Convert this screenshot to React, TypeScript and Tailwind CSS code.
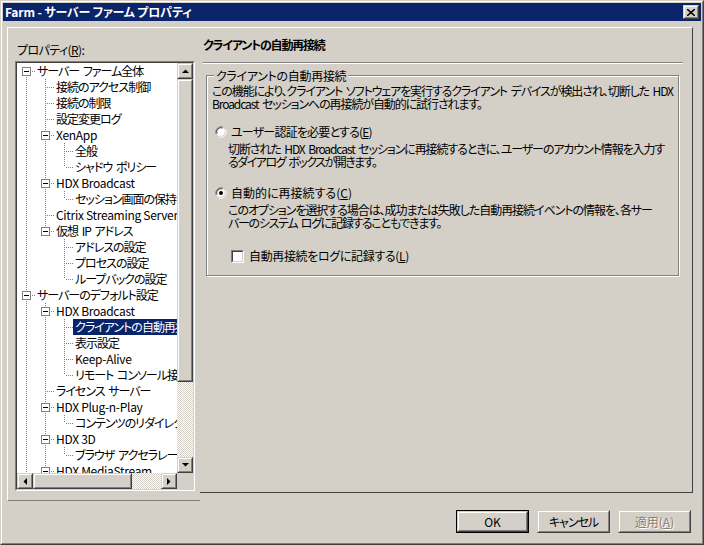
import React from "react";

type TreeNode = { label: string; level: number; expandable?: boolean; selected?: boolean };

const tree: TreeNode[] = [
  { label: "サーバー ファーム全体", level: 0, expandable: true },
  { label: "接続のアクセス制御", level: 1 },
  { label: "接続の制限", level: 1 },
  { label: "設定変更ログ", level: 1 },
  { label: "XenApp", level: 1, expandable: true },
  { label: "全般", level: 2 },
  { label: "シャドウ ポリシー", level: 2 },
  { label: "HDX Broadcast", level: 1, expandable: true },
  { label: "セッション画面の保持", level: 2 },
  { label: "Citrix Streaming Server", level: 1 },
  { label: "仮想 IP アドレス", level: 1, expandable: true },
  { label: "アドレスの設定", level: 2 },
  { label: "プロセスの設定", level: 2 },
  { label: "ループバックの設定", level: 2 },
  { label: "サーバーのデフォルト設定", level: 0, expandable: true },
  { label: "HDX Broadcast", level: 1, expandable: true },
  { label: "クライアントの自動再接続", level: 2, selected: true },
  { label: "表示設定", level: 2 },
  { label: "Keep-Alive", level: 2 },
  { label: "リモート コンソール接続", level: 2 },
  { label: "ライセンス サーバー", level: 1 },
  { label: "HDX Plug-n-Play", level: 1, expandable: true },
  { label: "コンテンツのリダイレクト", level: 2 },
  { label: "HDX 3D", level: 1, expandable: true },
  { label: "ブラウザ アクセラレーション", level: 2 },
  { label: "HDX MediaStream", level: 1, expandable: true },
  { label: "Flash", level: 2 },
  { label: "ライセンス", level: 1 },
  { label: "オフライン アクセス", level: 0, expandable: true },
];

const hasNext = (i: number) => {
  const lv = tree[i].level;
  for (let j = i + 1; j < tree.length; j++) {
    if (tree[j].level < lv) return false;
    if (tree[j].level === lv) return true;
  }
  return false;
};

const ancestorContinues = (i: number, lv: number) => {
  for (let j = i - 1; j >= 0; j--) {
    if (tree[j].level === lv) return hasNext(j);
  }
  return false;
};

// x centre of the connector for a level, relative to the tree's left edge
const cx = (lv: number) => 9 + lv * 19;

const isCjk = (s: string) => /[\u3040-\u30ff\u4e00-\u9fff]/.test(s);

function Connector({ index }: { index: number }) {
  const node = tree[index];
  const w = 18 + node.level * 19;
  const c = cx(node.level) + 0.5;
  return (
    <svg width={w} height={16} className="shrink-0" shapeRendering="crispEdges">
      {Array.from({ length: node.level }).map((_, a) =>
        ancestorContinues(index, a) ? (
          <line key={a} x1={cx(a) + 0.5} y1={0} x2={cx(a) + 0.5} y2={16} stroke="#808080" strokeDasharray="1 1" />
        ) : null
      )}
      {index > 0 && <line x1={c} y1={0} x2={c} y2={8} stroke="#808080" strokeDasharray="1 1" />}
      {hasNext(index) && <line x1={c} y1={8} x2={c} y2={16} stroke="#808080" strokeDasharray="1 1" />}
      <line x1={c + 1} y1={8.5} x2={c + 9} y2={8.5} stroke="#808080" strokeDasharray="1 1" />
      {node.expandable && (
        <g>
          <rect x={c - 4} y={4.5} width={8} height={8} fill="#fff" stroke="#808080" />
          <rect x={c - 2.5} y={8} width={5} height={1} fill="#000" />
        </g>
      )}
    </svg>
  );
}

function Raised({ className = "", children }: { className?: string; children?: React.ReactNode }) {
  return (
    <div className={`border border-t-[#d4d0c8] border-l-[#d4d0c8] border-r-[#404040] border-b-[#404040] ${className}`}>
      <div className="w-full h-full border border-t-white border-l-white border-r-[#808080] border-b-[#808080] bg-[#d4d0c8] flex items-center justify-center">
        {children}
      </div>
    </div>
  );
}

function Arrow({ dir }: { dir: "up" | "down" | "left" | "right" }) {
  const pts = {
    up: "0,4 7,4 3.5,0.5",
    down: "0,0 7,0 3.5,3.5",
    left: "4,0 4,7 0.5,3.5",
    right: "0,0 0,7 3.5,3.5",
  }[dir];
  const vertical = dir === "up" || dir === "down";
  return (
    <svg width={vertical ? 7 : 4} height={vertical ? 4 : 7}>
      <polygon points={pts} fill="#000" />
    </svg>
  );
}

const dither =
  "[background-image:repeating-conic-gradient(#d4d0c8_0_25%,#ffffff_0_50%)] [background-size:2px_2px]";

function TreeBox() {
  return (
    <div className="w-[180px] h-[430px] border border-t-[#808080] border-l-[#808080] border-r-white border-b-white">
      <div className="w-full h-full border border-t-[#404040] border-l-[#404040] border-r-[#d4d0c8] border-b-[#d4d0c8] flex flex-col">
        <div className="flex flex-1 min-h-0">
          <div className="w-[160px] bg-white overflow-hidden">
            {tree.map((n, i) => (
              <div key={i} className="flex h-4 items-center whitespace-nowrap">
                <Connector index={i} />
                <span
                  className={`px-[2px] leading-4 ${
                    isCjk(n.label) ? "tracking-[-1px] [word-spacing:2px]" : "tracking-[-0.3px]"
                  } ${n.selected ? "bg-[#0a246a] text-white" : ""}`}
                >
                  {n.label}
                </span>
              </div>
            ))}
          </div>
          <div className="w-4 flex flex-col">
            <Raised className="h-4 w-4 shrink-0">
              <Arrow dir="up" />
            </Raised>
            <Raised className="h-[303px] w-4 shrink-0" />
            <div className={`flex-1 ${dither}`} />
            <Raised className="h-4 w-4 shrink-0">
              <Arrow dir="down" />
            </Raised>
          </div>
        </div>
        <div className="h-4 flex shrink-0">
          <Raised className="h-4 w-4 shrink-0">
            <Arrow dir="left" />
          </Raised>
          <Raised className="h-4 w-[99px] shrink-0" />
          <div className={`flex-1 ${dither}`} />
          <Raised className="h-4 w-4 shrink-0">
            <Arrow dir="right" />
          </Raised>
          <div className="w-4 bg-[#d4d0c8]" />
        </div>
      </div>
    </div>
  );
}

function Radio({ checked }: { checked?: boolean }) {
  return (
    <svg width={12} height={12} className="shrink-0">
      <path d="M1 8 A5.5 5.5 0 0 1 8 1" stroke="#808080" fill="none" />
      <path d="M11 4 A5.5 5.5 0 0 1 4 11" stroke="#fff" fill="none" />
      <circle cx={6} cy={6} r={4.5} fill="#fff" />
      <path d="M2 7.5 A4.2 4.2 0 0 1 7.5 2" stroke="#404040" fill="none" />
      <path d="M10 4.5 A4.2 4.2 0 0 1 4.5 10" stroke="#d4d0c8" fill="none" />
      {checked && <circle cx={6} cy={6} r={2} fill="#000" />}
    </svg>
  );
}

function Checkbox() {
  return (
    <div className="w-[13px] h-[13px] border border-t-[#808080] border-l-[#808080] border-r-white border-b-white shrink-0">
      <div className="w-full h-full border border-t-[#404040] border-l-[#404040] border-r-[#d4d0c8] border-b-[#d4d0c8] bg-white" />
    </div>
  );
}

function Button({ children, isDefault, disabled }: { children: React.ReactNode; isDefault?: boolean; disabled?: boolean }) {
  return (
    <div className={`w-[73px] h-[23px] ${isDefault ? "border border-black" : ""}`}>
      <Raised className="w-full h-full">
        <span className={disabled ? "text-[#808080] [text-shadow:1px_1px_0_#fff]" : ""}>{children}</span>
      </Raised>
    </div>
  );
}

export default function App() {
  return (
    <div className="w-[704px] h-[545px] bg-[#d4d0c8] text-[12px] text-black [font-family:'Noto_Sans_CJK_JP','Noto_Sans',sans-serif] [font-feature-settings:'palt'] overflow-hidden">
      <div className="w-full h-full border border-t-[#d4d0c8] border-l-[#d4d0c8] border-r-[#404040] border-b-[#404040]">
        <div className="w-full h-full border border-t-white border-l-white border-r-[#808080] border-b-[#808080] p-px flex flex-col">
          {/* title bar */}
          <div className="h-[18px] bg-[#0a246a] flex items-center justify-between pl-[2px] pr-[2px] shrink-0">
            <span className="text-white font-bold leading-[18px] tracking-[-0.15px]">
              Farm - サーバー ファーム プロパティ
            </span>
            <Raised className="w-4 h-[14px]">
              <svg width={8} height={7}>
                <path d="M0 0 L8 7 M8 0 L0 7" stroke="#000" strokeWidth={1.6} />
              </svg>
            </Raised>
          </div>

          {/* body */}
          <div className="ml-[4px] mt-[6px] flex items-start">
            {/* left: tree pane */}
            <div className="w-[193px] h-[474px] border-t border-l border-b border-t-white border-l-white border-b-[#808080] pl-[7px] pt-[14px] flex flex-col">
              <div className="h-4 leading-4 pl-[2px] tracking-[-0.6px]">
                プロパティ(<span className="underline">R</span>):
              </div>
              <div className="mt-[3px]">
                <TreeBox />
              </div>
            </div>

            {/* right: property page */}
            <div className="w-[493px] h-[466px] border-t border-r border-b border-t-white border-r-[#404040] border-b-[#404040] pl-[3px] pt-[9px] flex flex-col">
              <div className="h-4 leading-4 font-bold tracking-[-1.2px]">クライアントの自動再接続</div>
              <div className="mt-[9px] w-[480px] border-t border-t-[#808080] border-b border-b-white" />
              <div className="relative mt-[11px] ml-[3px] w-[473px] h-[201px] border border-[#808080] shadow-[inset_1px_1px_0_#fff,1px_1px_0_#fff]">
                <span className="absolute -top-[8px] left-[7px] px-[2px] bg-[#d4d0c8] leading-4 tracking-[-0.3px]">
                  クライアントの自動再接続
                </span>
                <div className="pl-[5px] pt-[8px] leading-[13px] whitespace-nowrap tracking-[-1.1px] [word-spacing:2px]">
                  <div>この機能により、クライアント ソフトウェアを実行するクライアント デバイスが検出され、切断した HDX</div>
                  <div>Broadcast セッションへの再接続が自動的に試行されます。</div>
                </div>
                <div className="pl-[8px] mt-[14px] flex items-center gap-[4px] h-4">
                  <Radio />
                  <span className="tracking-[-0.8px]">
                    ユーザー認証を必要とする(<span className="underline">E</span>)
                  </span>
                </div>
                <div className="pl-[21px] mt-[2px] leading-[13px] whitespace-nowrap [word-spacing:2px]">
                  <div className="tracking-[-1.1px]">
                    切断された HDX Broadcast セッションに再接続するときに、ユーザーのアカウント情報を入力す
                  </div>
                  <div className="tracking-[-1.5px]">るダイアログ ボックスが開きます。</div>
                </div>
                <div className="pl-[8px] mt-[17px] flex items-center gap-[4px] h-4">
                  <Radio checked />
                  <span>
                    自動的に再接続する(<span className="underline">C</span>)
                  </span>
                </div>
                <div className="pl-[21px] mt-[2px] leading-[13px] whitespace-nowrap [word-spacing:2px]">
                  <div className="tracking-[-1.05px]">
                    このオプションを選択する場合は、成功または失敗した自動再接続イベントの情報を、各サー
                  </div>
                  <div className="tracking-[-1.3px]">バーのシステム ログに記録することもできます。</div>
                </div>
                <div className="pl-[24px] mt-[19px] flex items-center gap-[5px] h-4">
                  <Checkbox />
                  <span className="tracking-[-0.35px]">
                    自動再接続をログに記録する(<span className="underline">L</span>)
                  </span>
                </div>
              </div>
            </div>
          </div>

          {/* buttons */}
          <div className="mt-[9px] flex justify-end gap-[8px] pr-[10px]">
            <Button isDefault>OK</Button>
            <Button>
              <span className="tracking-[-1px]">キャンセル</span>
            </Button>
            <Button disabled>
              適用(<span className="underline">A</span>)
            </Button>
          </div>
        </div>
      </div>
    </div>
  );
}
